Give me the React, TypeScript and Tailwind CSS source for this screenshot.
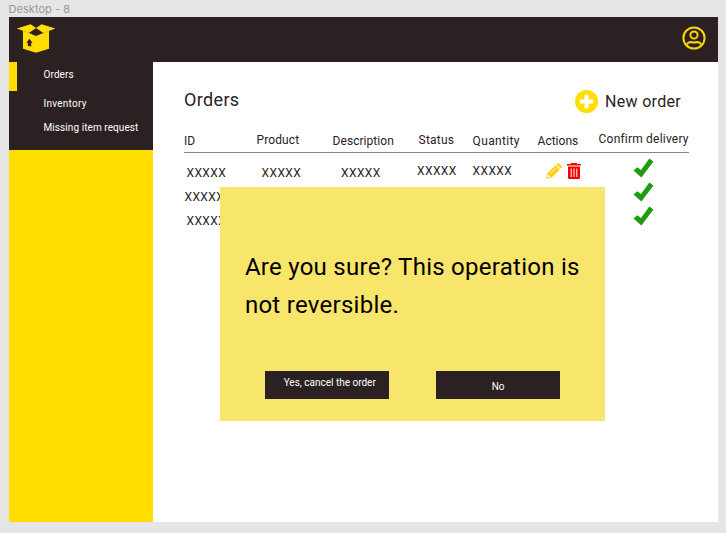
import React from "react";

function BoxLogo() {
  return (
    <svg className="block h-[30px] w-[40px]" viewBox="0 0 40 30">
      <path
        fill="#ffde00"
        d="M7 7 L20 9 L33 7 V24.8 L20 28.8 L7 24.8 Z"
      />
      <path fill="#2b2122" d="M9.5 7.6 L20 4.6 L31 7.6 L20 12 Z" />
      <path fill="#ffde00" d="M14.6 0.3 L20.2 4 L12.8 9 L0.8 4.4 Z M25.6 0.3 L20 4 L27.4 9 L39.4 4.4 Z" />
      <path fill="#2b2122" d="M13.4 14.8 L16.6 18.7 H15.2 V22.6 L11.8 21.7 V18.7 H10.4 Z" />
    </svg>
  );
}

function UserIcon() {
  return (
    <svg className="block size-6" viewBox="0 0 24 24" fill="none" stroke="#ffd400" strokeWidth="2">
      <circle cx="12" cy="12" r="10.6" />
      <circle cx="12" cy="9" r="3.6" />
      <path d="M4.8 18.6 Q6.2 16 9 16 Q12 17 15 16 Q17.8 16 19.2 18.6" />
    </svg>
  );
}

function PlusIcon() {
  return (
    <svg className="block size-[23px]" viewBox="0 0 23 23">
      <circle cx="11.5" cy="11.5" r="11.5" fill="#ffde00" />
      <path d="M11.5 4.8 V18.2 M4.8 11.5 H18.2" stroke="#fff" strokeWidth="4" />
    </svg>
  );
}

function Pencil() {
  return (
    <svg className="block size-4" viewBox="0 0 16 16">
      <path
        fill="#ffcf0d"
        d="M0.2 15.8 L1.2 10.5 L9.5 2.2 L13.8 6.5 L5.5 14.8 Z M10.4 1.4 L11.2 0.6 Q12.1 -0.1 13 0.6 L15.4 3 Q16.2 3.9 15.4 4.8 L14.6 5.6 Z"
      />
      <path d="M4.4 10.4 L9.6 5.2" stroke="#fff" strokeWidth="0.8" fill="none" />
      <path d="M1.9 11.6 L2.9 11.8 L3.2 12.9 L4.3 13.1 L4.5 14 L2.6 14.5 L1.5 13.4 Z" fill="#fff" />
    </svg>
  );
}

function Trash() {
  return (
    <svg className="block h-4 w-[14px]" viewBox="0 0 14 16">
      <path fill="#f60000" d="M4 0 H10 V1 H14 V2.6 H0 V1 H4 Z M1 3.5 H13 V14.5 Q13 16 11.5 16 H2.5 Q1 16 1 14.5 Z" />
      <path d="M4.2 5.5 V14 M7 5.5 V14 M9.8 5.5 V14" stroke="#fff" strokeWidth="1" />
    </svg>
  );
}

function Check() {
  return (
    <svg className="block h-5 w-[21px]" viewBox="0 0 21 20">
      <path fill="#1f9c12" d="M0.5 12.6 L4.3 9.2 L8 12.1 L16.3 0.5 L20.5 3.4 L8.4 19.6 Z" />
    </svg>
  );
}

const ids = ["pl-[2.5px]", "pl-[0.5px]", "pl-[2.5px]"];

export default function App() {
  return (
    <div className="relative flex h-[533px] w-[726px] flex-col overflow-hidden bg-[#e5e5e5] pl-[8.5px] font-['Roboto','Liberation_Sans',sans-serif] text-[#2b2122]">
      <div className="h-[17.4px] shrink-0 pt-[3px] font-['Inter',sans-serif] text-[11px] leading-[13px] tracking-[0.05px] text-[#999]">
        Desktop - 8
      </div>
      <div className="flex h-[504.6px] w-[709.5px] flex-col bg-white">
        <header className="flex h-[45px] shrink-0 items-start justify-between bg-[#2b2122] pl-[7.5px] pr-3 pt-[7px]">
          <BoxLogo />
          <div className="pt-[2px]">
            <UserIcon />
          </div>
        </header>
        <div className="flex flex-1">
          <aside className="w-[144.9px] shrink-0 bg-[#ffde00]">
            <nav className="flex h-[87.5px] bg-[#2b2122] text-[10px] leading-3 text-white">
              <div className="h-[28.5px] w-[8.5px] bg-[#ffde00]" />
              <div className="flex flex-col whitespace-nowrap pl-[26.5px] pt-[6.4px]">
                <a className="tracking-[0.1px]">Orders</a>
                <a className="mt-[17px] tracking-[0.25px]">Inventory</a>
                <a className="mt-[12px] tracking-[0.08px]">Missing item request</a>
              </div>
            </nav>
          </aside>
          <main className="flex flex-1 flex-col pl-[30.6px] pr-[29px]">
            <div className="flex h-[65px] items-start justify-between pt-[27px]">
              <h1 className="text-[18px] leading-[22px] tracking-[0.35px]">Orders</h1>
              <div className="flex items-center gap-[7px] pr-[8px]">
                <PlusIcon />
                <span className="pt-px text-[16px] leading-6 tracking-[0.3px]">New order</span>
              </div>
            </div>
            <div className="flex h-[26px] items-start whitespace-nowrap border-b border-[#888] pt-[5px] text-[12px] leading-4">
              <span className="w-[72.6px] pt-px">ID</span>
              <span className="w-[76px] tracking-[0.1px]">Product</span>
              <span className="w-[86px] pt-px tracking-[0.05px]">Description</span>
              <span className="w-[54px] tracking-[0.2px]">Status</span>
              <span className="w-[65px] pt-px tracking-[0.35px]">Quantity</span>
              <span className="w-[61px] pt-px">Actions</span>
              <span className="-mt-px tracking-[0.2px]">Confirm delivery</span>
            </div>
            <div className="flex flex-col pt-[4.6px] text-[12px]">
              {ids.map((idClass, i) => (
                <div key={i} className="flex h-6 items-start leading-4 tracking-[0.4px]">
                  <span className={"w-[77.6px] pt-[7px] " + idClass}>XXXXX</span>
                  <span className="w-[79.5px] pt-[7px]">XXXXX</span>
                  <span className="w-[76px] pt-[7px]">XXXXX</span>
                  <span className="w-[55.5px] pt-[5px]">XXXXX</span>
                  <span className="w-[73px] pt-[5px]">XXXXX</span>
                  <span className="flex w-[87px] gap-[5.5px] pt-[5px]">
                    <Pencil />
                    <Trash />
                  </span>
                  <Check />
                </div>
              ))}
            </div>
          </main>
        </div>
      </div>
      <div
        role="dialog"
        className="absolute left-[220.4px] top-[187px] flex h-[234.4px] w-[384.6px] flex-col bg-[#f8e56c] pl-[24.5px] pt-[62px]"
      >
        <p className="text-[24px] leading-[37.5px] tracking-[0.27px] text-black">
          Are you sure? This operation is
          <br />
          not reversible.
        </p>
        <div className="flex gap-[47.7px] pl-5 pt-[47px] text-[10px] leading-3 text-white">
          <button className="flex h-7 w-[123.7px] items-start justify-center whitespace-nowrap bg-[#2b2122] pl-[6px] pt-[6px]">
            Yes, cancel the order
          </button>
          <button className="flex h-7 w-[123.7px] items-center justify-center bg-[#2b2122] pt-[3px]">No</button>
        </div>
      </div>
    </div>
  );
}
